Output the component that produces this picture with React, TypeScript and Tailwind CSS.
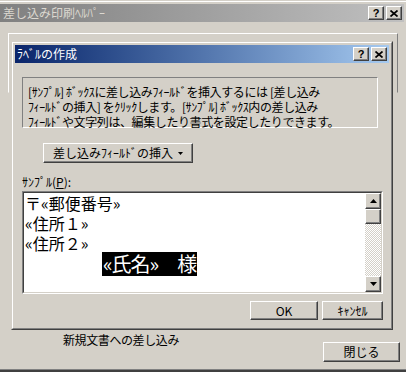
const font = "font-['Noto_Sans_CJK_JP','Noto_Sans_CJK_SC',sans-serif]";
const raised =
  "bg-[#d4d0c8] border border-t-white border-l-white border-r-[#404040] border-b-[#404040] shadow-[inset_-1px_-1px_#808080]";

function CloseGlyph() {
  return (
    <svg width="8" height="7" viewBox="0 0 8 7">
      <path d="M0.5 0.5 L7.5 6.5 M7.5 0.5 L0.5 6.5" stroke="#000" strokeWidth="1.7" />
    </svg>
  );
}

function CaptionButtons() {
  return (
    <div className="flex items-center gap-[2px] mr-[2px]">
      <div className={`w-[16px] h-[14px] flex items-center justify-center ${raised}`}>
        <span className="font-['Liberation_Sans',sans-serif] font-bold text-[11px] leading-none text-black">?</span>
      </div>
      <div className={`w-[16px] h-[14px] flex items-center justify-center ${raised}`}>
        <CloseGlyph />
      </div>
    </div>
  );
}

function Arrow({ up }: { up?: boolean }) {
  return (
    <div className={`w-[16px] h-[16px] flex items-center justify-center ${raised}`}>
      <svg width="7" height="4" viewBox="0 0 7 4">
        <path d={up ? "M3.5 0 L7 4 L0 4 Z" : "M0 0 L7 0 L3.5 4 Z"} fill="#000" />
      </svg>
    </div>
  );
}

function SampleBox() {
  return (
    <div className="ml-[7px] w-[361px] h-[103px] border border-t-[#808080] border-l-[#808080] border-r-white border-b-white">
      <div className="h-full flex border border-t-[#404040] border-l-[#404040] border-r-[#d4d0c8] border-b-[#d4d0c8] bg-white">
        <div className="flex-1 flex flex-col pl-[1px] text-black">
          <div className="h-[20px] text-[16px] leading-[20px]">〒«郵便番号»</div>
          <div className="h-[20px] text-[16px] leading-[20px]">«住所１»</div>
          <div className="h-[20px] text-[16px] leading-[20px]">«住所２»</div>
          <div className="mt-[-1px] flex pl-[77px]">
            <div className="h-[24px] px-[1px] bg-black text-white text-[20px] leading-[24px] tracking-[-1px] whitespace-pre">
              «氏名»　様
            </div>
          </div>
        </div>
        <div className="w-[16px] flex flex-col">
          <Arrow up />
          <div className={`h-[15px] ${raised}`} />
          <div className="flex-1 bg-[repeating-conic-gradient(#ffffff_0_25%,#d4d0c8_0_50%)] bg-[length:2px_2px]" />
          <Arrow />
        </div>
      </div>
    </div>
  );
}

function LabelDialog() {
  return (
    <div className="absolute left-[11px] top-[19px] w-[382px] h-[289px] bg-[#d4d0c8] border border-t-[#d4d0c8] border-l-[#d4d0c8] border-r-[#404040] border-b-[#404040]">
      <div className="h-full p-[2px] border border-t-white border-l-white border-r-[#808080] border-b-[#808080]">
        <div className="h-[18px] flex items-center justify-between bg-gradient-to-r from-[#0a246a] to-[#a6caf0]">
          <span className="pl-[2px] text-white text-[12px] leading-none">ﾗﾍﾞﾙの作成</span>
          <CaptionButtons />
        </div>
        <div className="mt-[14px] ml-[7px] w-[356px] h-[51px] border border-t-[#808080] border-l-[#808080] border-r-white border-b-white pt-[6px] pl-[5px] text-black text-[12px] leading-[15px] tracking-[-0.4px]">
          <div>[ｻﾝﾌﾟﾙ] ﾎﾞｯｸｽに差し込みﾌｨｰﾙﾄﾞを挿入するには [差し込み</div>
          <div>ﾌｨｰﾙﾄﾞの挿入] をｸﾘｯｸします。[ｻﾝﾌﾟﾙ] ﾎﾞｯｸｽ内の差し込み</div>
          <div>ﾌｨｰﾙﾄﾞや文字列は、編集したり書式を設定したりできます。</div>
        </div>
        <div className={`mt-[15px] ml-[28px] w-[150px] h-[20px] flex items-center justify-center gap-[5px] text-[12px] text-black ${raised}`}>
          <span className="leading-none">差し込みﾌｨｰﾙﾄﾞの挿入</span>
          <svg width="5" height="3" viewBox="0 0 5 3">
            <path d="M0 0 L5 0 L2.5 3 Z" fill="#000" />
          </svg>
        </div>
        <div className="mt-[11px] ml-[7px] h-[15px] text-[12px] leading-[15px] text-black">
          ｻﾝﾌﾟﾙ(<span className="underline">P</span>):
        </div>
        <div className="mt-[2px]">
          <SampleBox />
        </div>
        <div className="mt-[7px] ml-[7px] w-[361px] flex justify-end gap-[4px]">
          <div className={`w-[68px] h-[19px] flex items-center justify-center text-[12px] leading-none text-black ${raised}`}>OK</div>
          <div className={`w-[61px] h-[19px] flex items-center justify-center text-[12px] leading-none text-black ${raised}`}>ｷｬﾝｾﾙ</div>
        </div>
      </div>
    </div>
  );
}

export default function App() {
  return (
    <div className={`w-[406px] h-[372px] bg-[#d4d0c8] overflow-hidden flex flex-col ${font}`}>
      <div className="h-[4px] border-t border-t-[#d4d0c8] bg-[#d4d0c8]">
        <div className="h-[1px] bg-white" />
      </div>
      <div className="h-[18px] mr-[2px] flex items-center justify-between bg-gradient-to-r from-[#808080] to-[#c0c0c0]">
        <span className="pl-[3px] text-[#dcd8d0] text-[12px] leading-none">差し込み印刷ﾍﾙﾊﾟｰ</span>
        <CaptionButtons />
      </div>
      <div className="relative flex-1 flex flex-col">
        <div className="mt-[11px] ml-[8px] w-[390px] h-[60px] border border-t-white border-l-white border-r-[#808080] border-b-transparent" />
        <div className="mt-[239px] flex justify-between items-start">
          <span className="pl-[63px] text-[12px] leading-[16px] tracking-[-0.4px] text-black">新規文書への差し込み</span>
          <div className={`mt-[10px] mr-[6px] w-[77px] h-[20px] flex items-center justify-center text-[12px] leading-none text-black ${raised}`}>
            閉じる
          </div>
        </div>
        <LabelDialog />
      </div>
      <div className="h-[3px] border-t border-t-[#808080] bg-[#404040]" />
    </div>
  );
}
